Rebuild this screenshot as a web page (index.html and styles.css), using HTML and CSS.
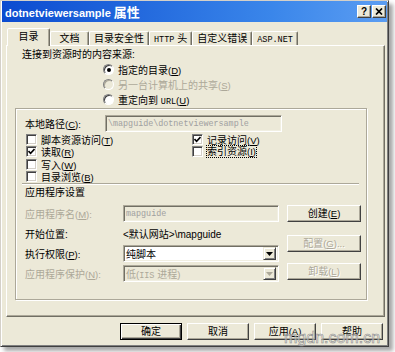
FILE: index.html
```html
<!DOCTYPE html>
<html lang="zh-CN">
<head>
  <meta charset="UTF-8" />
  <meta name="viewport" content="width=device-width, initial-scale=1.0" />
  <title>dotnetviewersample 属性</title>
  <link rel="stylesheet" href="styles.css">
</head>
<body>
<div class="screen">
  <div class="window">
    <!-- Title bar -->
    <div class="titlebar">
      <span class="title">dotnetviewersample <span class="title-cjk">属性</span></span>
      <div class="caption-buttons">
        <span class="cap-btn">?</span>
        <span class="cap-btn">
          <svg width="8" height="7" viewBox="0 0 8 7"><path d="M1 0.5 L7 6.5 M7 0.5 L1 6.5" stroke="#000" stroke-width="1.7" fill="none"/></svg>
        </span>
      </div>
    </div>

    <!-- Tabs -->
    <div class="tabs">
      <div class="tab active">目录</div>
      <div class="tab">文档</div>
      <div class="tab">目录安全性</div>
      <div class="tab"><span class="latin">HTTP</span> 头</div>
      <div class="tab">自定义错误</div>
      <div class="tab"><span class="latin">ASP.NET</span></div>
    </div>

    <!-- Tab page -->
    <div class="panel">
      <div class="source-label">连接到资源时的内容来源:</div>
      <div class="radios">
        <div class="radio"><span class="radio-box checked"></span><span>指定的目录<span class="key">(<u>D</u>)</span></span></div>
        <div class="radio disabled"><span class="radio-box"></span><span>另一台计算机上的共享<span class="key">(<u>S</u>)</span></span></div>
        <div class="radio"><span class="radio-box"></span><span>重定向到 <span class="latin">URL</span><span class="key">(<u>U</u>)</span></span></div>
      </div>

      <div class="group">
        <div class="path-row">
          <span class="path-label">本地路径<span class="key">(<u>C</u>):</span></span>
          <div class="field disabled path-field"><span class="mono">\mapguide\dotnetviewersample</span></div>
        </div>

        <div class="checks">
          <div class="check"><span class="check-box"></span><span>脚本资源访问<span class="key">(<u>T</u>)</span></span></div>
          <div class="check"><span class="check-box checked"><svg width="7" height="7" viewBox="0 0 7 7"><path d="M0.5 3 L2.6 5.3 L6.5 1" stroke="#000" stroke-width="1.6" fill="none"/></svg></span><span>记录访问<span class="key">(<u>V</u>)</span></span></div>
          <div class="check"><span class="check-box checked"><svg width="7" height="7" viewBox="0 0 7 7"><path d="M0.5 3 L2.6 5.3 L6.5 1" stroke="#000" stroke-width="1.6" fill="none"/></svg></span><span>读取<span class="key">(<u>R</u>)</span></span></div>
          <div class="check"><span class="check-box"></span><span class="focus">索引资源<span class="key">(<u>I</u>)</span></span></div>
          <div class="check"><span class="check-box"></span><span>写入<span class="key">(<u>W</u>)</span></span></div>
          <div></div>
          <div class="check"><span class="check-box"></span><span>目录浏览<span class="key">(<u>B</u>)</span></span></div>
        </div>

        <div class="separator"></div>
        <div class="app-heading">应用程序设置</div>

        <div class="app-area">
          <div class="app-fields">
            <div class="app-row row-name">
              <span class="app-label disabled-text">应用程序名<span class="key">(<u>M</u>):</span></span>
              <div class="field disabled app-field"><span class="mono">mapguide</span></div>
            </div>
            <div class="app-row row-start">
              <span class="app-label">开始位置:</span>
              <span class="start-value">&lt;默认网站&gt;\mapguide</span>
            </div>
            <div class="app-row row-exec">
              <span class="app-label">执行权限<span class="key">(<u>P</u>):</span></span>
              <div class="field app-field select">
                <span class="select-value">纯脚本</span>
                <span class="select-arrow"><svg width="7" height="4" viewBox="0 0 7 4"><path d="M0 0 H7 L3.5 4 Z" fill="#000"/></svg></span>
              </div>
            </div>
            <div class="app-row row-protect">
              <span class="app-label disabled-text">应用程序保护<span class="key">(<u>N</u>):</span></span>
              <div class="field disabled app-field select">
                <span class="select-value disabled-text">低<span class="key">(</span><span class="latin">IIS</span> 进程<span class="key">)</span></span>
                <span class="select-arrow"><svg width="7" height="4" viewBox="0 0 7 4"><path d="M0 0 H7 L3.5 4 Z" fill="#aca899"/></svg></span>
              </div>
            </div>
          </div>
          <div class="app-buttons">
            <button class="btn btn-create">创建<span class="key">(<u>E</u>)</span></button>
            <button class="btn btn-config" disabled>配置<span class="key">(<u>G</u>)...</span></button>
            <button class="btn btn-unload" disabled>卸载<span class="key">(<u>L</u>)</span></button>
          </div>
        </div>
      </div>
    </div>

    <!-- Dialog buttons -->
    <div class="actions">
      <button class="btn btn-default">确定</button>
      <button class="btn">取消</button>
      <button class="btn">应用<span class="key">(<u>A</u>)</span></button>
      <button class="btn">帮助</button>
    </div>
  </div>

  <div class="watermark">mgdn.com.cn</div>
</div>
</body>
</html>
```

FILE: styles.css
```css
/* Global */
body {
  margin: 0;
  background: #fff;
  font-family: "Liberation Sans", "Noto Sans CJK SC", sans-serif;
  font-size: 10px;
  color: #000;
  text-autospace: no-autospace;
  text-spacing-trim: space-all;
}
u {
  text-underline-offset: 1px;
}
button {
  font-family: inherit;
  font-size: 10px;
  padding: 0;
  color: #000;
}
.key {
  font-family: "Liberation Sans", sans-serif;
  font-size: 9.5px;
}
.latin {
  font-family: "Liberation Mono", monospace;
  font-size: 8.5px;
}
.mono {
  font-family: "Liberation Mono", monospace;
  font-size: 8.4px;
}
.disabled-text,
.disabled {
  color: #aca899;
}

.screen {
  position: relative;
  width: 395px;
  height: 352px;
  overflow: hidden;
}

/* Window frame */
.window {
  width: 389px;
  height: 347px;
  box-sizing: border-box;
  background: #ece9d8;
  border: 1px solid;
  border-color: #d4d0c8 #404040 #404040 #d4d0c8;
  box-shadow: inset 1px 1px #fff, inset -1px -1px #808080, 4px 4px 4px rgba(0,0,0,0.35);
  padding: 0 1px 2px;
}

/* Title bar */
.titlebar {
  height: 21px;
  display: flex;
  align-items: center;
  justify-content: space-between;
  background: linear-gradient(to right, #0b4bd0, #3a86ea 70%, #5b9df2);
  color: #fff;
  padding: 0 1px 0 3px;
}
.title {
  font: bold 11px "Liberation Sans", "Noto Sans CJK SC", sans-serif;
}
.title-cjk {
  font-family: "Noto Sans CJK SC", sans-serif;
  font-size: 13px;
}
.caption-buttons {
  display: flex;
  gap: 1px;
}
.cap-btn {
  width: 14px;
  height: 13px;
  box-sizing: border-box;
  display: flex;
  align-items: center;
  justify-content: center;
  background: #ece9d8;
  border: 1px solid;
  border-color: #fff #404040 #404040 #fff;
  box-shadow: inset -1px -1px #aca899;
  font: bold 10px "Liberation Sans", sans-serif;
  color: #000;
}

/* Tabs */
.tabs {
  display: flex;
  align-items: flex-end;
  height: 17px;
  margin: 6px 0 0 5px;
}
.tab {
  height: 14px;
  min-width: 39px;
  box-sizing: border-box;
  padding: 0 4px;
  border: 1px solid;
  border-bottom: 0;
  border-color: #fff #716f64 transparent #fff;
  box-shadow: inset -1px 0 #aca899;
  border-radius: 2px 2px 0 0;
  text-align: center;
  line-height: 13px;
  white-space: nowrap;
}
.tab.active {
  position: relative;
  z-index: 1;
  height: 18px;
  min-width: 43px;
  margin-bottom: -1px;
  background: #ece9d8;
  line-height: 15px;
}

/* Tab page */
.panel {
  height: 272px;
  box-sizing: border-box;
  margin: 0 2px 0 4px;
  border: 1px solid;
  border-color: #fff #716f64 #716f64 #fff;
  box-shadow: inset -1px -1px #aca899;
}
.source-label {
  margin: 3px 0 0 15px;
  line-height: 12px;
}
.radios {
  margin: 1px 0 0 96px;
}
.radio {
  display: flex;
  align-items: center;
  gap: 4px;
  height: 15px;
}
.radio-box {
  width: 11px;
  height: 11px;
  box-sizing: border-box;
  border-radius: 50%;
  border: 1px solid;
  border-color: #808080 #fff #fff #808080;
  box-shadow: inset 1px 1px #404040;
  background: #fff;
  display: flex;
  align-items: center;
  justify-content: center;
}
.radio-box.checked::after {
  content: "";
  width: 4px;
  height: 4px;
  border-radius: 50%;
  background: #000;
}
.radio.disabled {
  color: #aca899;
}
.radio.disabled .radio-box {
  background: #ece9d8;
  box-shadow: inset 1px 1px #aca899;
}

/* Group frame */
.group {
  width: 352px;
  height: 192px;
  box-sizing: border-box;
  margin: 1px 0 0 8px;
  padding: 6px 0 0 9px;
  border: 1px solid #aca899;
  box-shadow: inset 1px 1px #fff, 1px 1px #fff;
}
.path-row {
  display: flex;
  align-items: center;
  height: 17px;
}
.path-label {
  width: 80px;
}

/* Sunken fields */
.field {
  height: 17px;
  box-sizing: border-box;
  border: 1px solid;
  border-color: #aca899 #fff #fff #aca899;
  box-shadow: inset 1px 1px #716f64, inset -1px -1px #f1efe2;
  background: #fff;
  display: flex;
  align-items: center;
  padding-left: 2px;
}
.field.disabled {
  background: #ece9d8;
  color: #a0a0a0;
}
.path-field {
  width: 177px;
}

/* Checkboxes */
.checks {
  display: grid;
  grid-template-columns: 166px auto;
  grid-auto-rows: 12.5px;
  margin: 1px 0 0 1px;
}
.check {
  display: flex;
  align-items: center;
  gap: 4px;
}
.check-box {
  width: 11px;
  height: 11px;
  box-sizing: border-box;
  border: 1px solid;
  border-color: #808080 #fff #fff #808080;
  box-shadow: inset 1px 1px #404040, inset -1px -1px #d4d0c8;
  background: #fff;
  display: flex;
  align-items: center;
  justify-content: center;
}
.focus {
  outline: 1px dotted #000;
  line-height: 11px;
}

.separator {
  width: 337px;
  height: 1px;
  margin: 0 0 0 -3px;
  background: #aca899;
  box-shadow: 0 1px #fff;
}
.app-heading {
  margin-top: 3px;
  line-height: 12px;
}

/* Application settings */
.app-area {
  display: flex;
}
.app-fields {
  width: 254px;
}
.app-row {
  display: flex;
  align-items: center;
}
.app-label {
  width: 98px;
}
.app-field {
  width: 156px;
}
.row-name {
  margin-top: 6px;
}
.row-start {
  margin-top: 5px;
  height: 12px;
}
.row-exec {
  margin-top: 6px;
}
.row-protect {
  margin-top: 3px;
}
.select {
  justify-content: space-between;
  padding: 0 2px 0 2px;
}
.select-arrow {
  width: 13px;
  height: 13px;
  box-sizing: border-box;
  display: flex;
  align-items: center;
  justify-content: center;
  background: #ece9d8;
  border: 1px solid;
  border-color: #ece9d8 #404040 #404040 #ece9d8;
  box-shadow: inset 1px 1px #fff, inset -1px -1px #808080;
}
.app-buttons {
  margin-left: 8px;
  display: flex;
  flex-direction: column;
}

/* Raised buttons */
.btn {
  height: 17px;
  box-sizing: border-box;
  background: #ece9d8;
  border: 1px solid;
  border-color: #fff #404040 #404040 #fff;
  box-shadow: inset -1px -1px #aca899;
  line-height: 14px;
  text-align: center;
}
.btn:disabled {
  color: #aca899;
  text-shadow: 1px 1px #fff;
}
.btn-default {
  border-color: #000;
  box-shadow: inset 1px 1px #fff, inset -1px -1px #404040, inset -2px -2px #aca899;
}
.app-buttons .btn {
  width: 74px;
}
.btn-create {
  margin-top: 6px;
}
.btn-config {
  margin-top: 13px;
}
.btn-unload {
  margin-top: 11px;
}

/* Dialog buttons */
.actions {
  display: flex;
  justify-content: flex-end;
  gap: 5px;
  margin-top: 6px;
  padding-right: 4px;
}
.actions .btn {
  width: 62px;
}

/* Watermark over the corner */
.watermark {
  position: absolute;
  left: 284px;
  top: 329px;
  font: 16px "Liberation Sans", sans-serif;
  color: rgba(255,255,255,0.5);
  -webkit-text-stroke: 0.6px #8c8c8c;
}
```
